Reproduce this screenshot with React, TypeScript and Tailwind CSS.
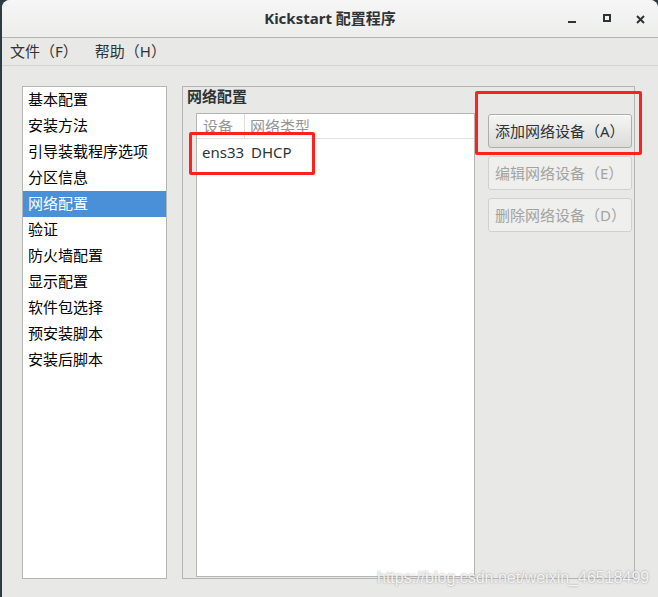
import React from "react";

const FONT = { fontFamily: '"Noto Sans", "Noto Sans CJK SC", sans-serif' };

const sections = [
  "基本配置",
  "安装方法",
  "引导装载程序选项",
  "分区信息",
  "网络配置",
  "验证",
  "防火墙配置",
  "显示配置",
  "软件包选择",
  "预安装脚本",
  "安装后脚本",
];

function TitleBar() {
  return (
    <div className="relative flex h-[38px] shrink-0 items-center justify-center rounded-t-[8px] border-b border-[#b4b4b2] bg-gradient-to-b from-[#f6f6f6] to-[#ededec]">
      <span className="text-[15px] font-bold text-[#2e3436]">Kickstart 配置程序</span>
      {/* window controls */}
      <svg className="absolute left-[558px] top-[10px]" width="92" height="20" viewBox="0 0 92 20">
        <rect x="8" y="11" width="8" height="2" fill="#2e3436" />
        <rect x="44" y="5" width="6" height="6" fill="none" stroke="#2e3436" strokeWidth="2" />
        <path d="M77 6 L84 13 M84 6 L77 13" stroke="#2e3436" strokeWidth="2" />
      </svg>
    </div>
  );
}

function Button({ label, disabled }: { label: string; disabled?: boolean }) {
  return (
    <div
      className={`flex h-[34px] w-[144px] items-center pl-[6px] text-[15px] rounded-[3px] border ${
        disabled
          ? "border-[#d0d0ce] bg-[#efefee] text-[#a3a3a1]"
          : "border-[#adadab] bg-gradient-to-b from-[#f5f5f4] to-[#dcdcda] text-[#2e3436] shadow-[0_1px_0_#ffffff_inset]"
      }`}
    >
      {label}
    </div>
  );
}

export default function App() {
  return (
    <div className="relative h-[597px] w-[658px] overflow-hidden bg-[#2d3b42] pl-[2px]" style={FONT}>
      <div className="flex h-full flex-col rounded-t-[8px] bg-[#e8e8e7]">
        <TitleBar />

        <div className="flex h-[28px] shrink-0 items-center border-b border-[#d4d4d2] text-[15px] text-[#2e3436]">
          <span className="ml-[8px]">文件（F）</span>
          <span className="ml-[17px]">帮助（H）</span>
        </div>

        <div className="flex pl-[20px] pt-[20px]">
          <ul className="h-[493px] w-[145px] border border-[#b5b5b3] bg-white text-[15px] text-black">
            {sections.map((s) => (
              <li
                key={s}
                className={`flex h-[26px] items-center pb-[2px] pl-[5px] ${
                  s === "网络配置" ? "bg-[#4a90d9] text-white" : ""
                }`}
              >
                {s}
              </li>
            ))}
          </ul>

          <div className="ml-[15px] flex h-[493px] w-[453px] flex-col border border-[#b5b5b3] pb-[1px] pr-[1px]">
            <div className="h-[26px] pl-[4px] text-[15px] font-bold leading-[18px] text-[#2e3436]">网络配置</div>
            <div className="flex flex-1">
              <div className="ml-[13px] h-[464px] w-[279px] border border-[#b5b5b3] bg-white text-[15px]">
                <div className="flex h-[25px] items-center border-b border-[#dedede] text-[#959595]">
                  <div className="flex h-full w-[48px] items-center border-r border-[#dedede] pl-[6px]">设备</div>
                  <div className="pl-[5px]">网络类型</div>
                </div>
                <div className="flex h-[26px] items-center text-[#2e3436]">
                  <span className="w-[49px] pl-[5px]">ens33</span>
                  <span className="pl-[5px]">DHCP</span>
                </div>
              </div>
              <div className="ml-[13px] mt-[1px] flex flex-col gap-[8px]">
                <Button label="添加网络设备（A）" />
                <Button label="编辑网络设备（E）" disabled />
                <Button label="删除网络设备（D）" disabled />
              </div>
            </div>
          </div>
        </div>
      </div>

      <div className="absolute left-[189px] top-[132px] h-[43px] w-[126px] rounded-[2px] border-[3px] border-[#ff2020]" />
      <div className="absolute left-[475px] top-[91px] h-[64px] w-[167px] rounded-[2px] border-[3px] border-[#ff2020]" />

      <div
        className="absolute left-[377px] top-[566px] text-[16px] text-white/85 [text-shadow:0_0_2px_#8a8a8a]"
        style={{ fontFamily: '"Liberation Sans", sans-serif' }}
      >
        https://blog.csdn.net/weixin_46518499
      </div>
    </div>
  );
}
